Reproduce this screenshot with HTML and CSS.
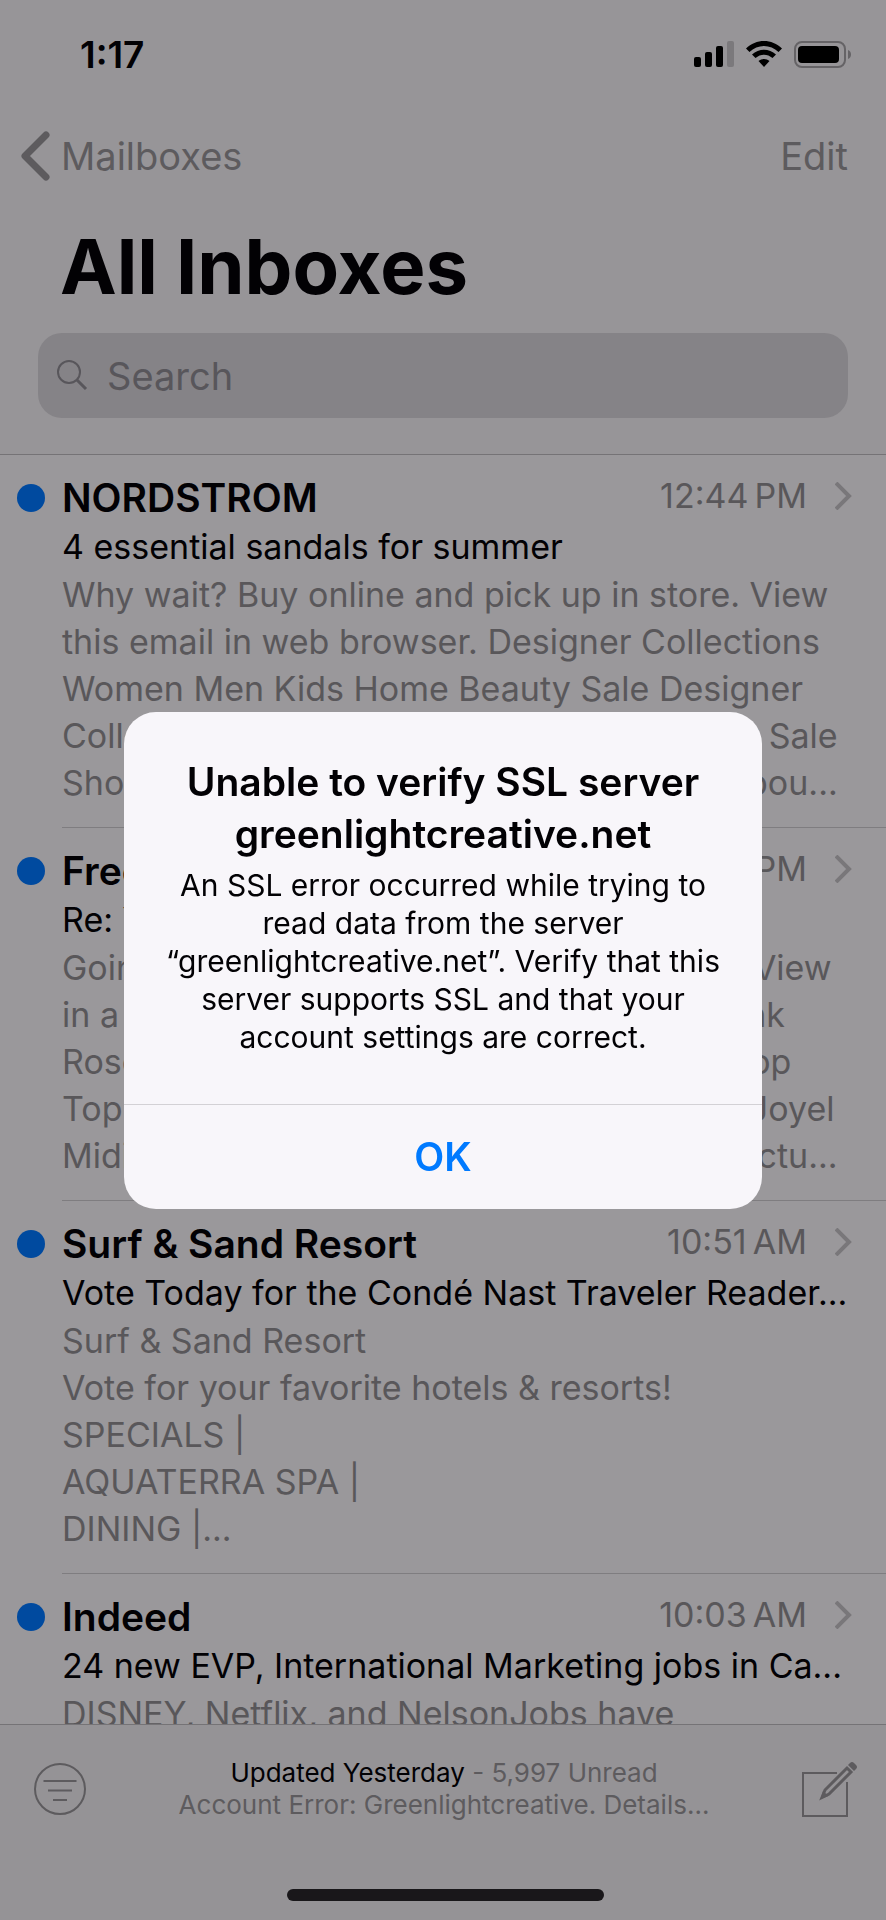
FILE: index.html
```html
<!DOCTYPE html>
<html lang="en">

<head>
    <meta charset="UTF-8">
    <meta name="viewport" content="width=device-width, initial-scale=1.0">
    <title>All Inboxes</title>
    <link rel="stylesheet" href="styles.css">
</head>

<body>
    <div class="app">
        <header class="header">
            <div class="status-bar">
                <span class="clock">1:17</span>
                <div class="status-icons">
                    <svg width="40" height="26" viewBox="0 0 40 26">
                        <rect x="0" y="16" width="7" height="10" rx="2"/>
                        <rect x="11" y="11" width="7" height="15" rx="2"/>
                        <rect x="22" y="5" width="7" height="21" rx="2"/>
                        <rect x="33" y="0" width="7" height="26" rx="2" fill="#7b797c"/>
                    </svg>
                    <svg width="36" height="26" viewBox="0 0 36 26">
                        <path d="M0 7.5C10-2.5 26-2.5 36 7.5L32.5 11C24.5 3 11.500 3 3.500 11Z"/>
                        <path d="M6 13.500C12.800 7 23.200 7 30 13.500L26.500 17C21.500 12.500 14.500 12.500 9.500 17Z"/>
                        <path d="M12.500 20C15.500 17.300 20.500 17.300 23.500 20L18 26Z"/>
                    </svg>
                    <svg width="58" height="27" viewBox="0 0 58 27">
                        <rect x="1" y="1" width="50" height="25" rx="7" fill="none" stroke="#656366" stroke-width="2"/>
                        <rect x="4" y="5" width="41" height="17" rx="4"/>
                        <path d="M54 9C58 10.500 58 16.500 54 18Z" fill="#656366"/>
                    </svg>
                </div>
            </div>

            <nav class="nav">
                <a class="back" href="#">
                    <svg width="30" height="50" viewBox="0 0 30 50" fill="none" stroke="currentColor" stroke-width="7" stroke-linecap="round" stroke-linejoin="round">
                        <path d="M26 4L5 25L26 46"/>
                    </svg>
                    Mailboxes
                </a>
                <button class="edit">Edit</button>
            </nav>

            <h1 class="title">All Inboxes</h1>

            <label class="search">
                <svg width="31" height="31" viewBox="0 0 31 31" fill="none" stroke="currentColor">
                    <circle cx="12" cy="12" r="11" stroke-width="2"/>
                    <path d="M20 20L29 29" stroke-width="3"/>
                </svg>
                <input type="text" placeholder="Search" aria-label="Search">
            </label>
        </header>

        <main class="list">
            <article class="mail">
                <div class="mail-head">
                    <span class="dot"></span>
                    <h2>NORDSTROM</h2>
                    <time>12:44&#8201;PM</time>
                    <svg class="arrow" width="17" height="28" viewBox="0 0 17 28"><path d="M1 1L14 14L1 27"/></svg>
                </div>
                <p class="subject">4 essential sandals for summer</p>
                <p class="preview">
                    <span>Why wait? Buy online and pick up in store. View</span>
                    <span>this email in web browser. Designer Collections</span>
                    <span>Women Men Kids Home Beauty Sale Designer</span>
                    <span>Collections Women Men Kids Home Beauty Sale</span>
                    <span>Shop online for new sandals. Learn more abou...</span>
                </p>
            </article>

            <article class="mail">
                <div class="mail-head">
                    <span class="dot"></span>
                    <h2>Free People</h2>
                    <time>12:05&#8201;PM</time>
                    <svg class="arrow" width="17" height="28" viewBox="0 0 17 28"><path d="M1 1L14 14L1 27"/></svg>
                </div>
                <p class="subject">Re: Your summer plans</p>
                <p class="preview">
                    <span>Going somewhere? Free shipping for trips. View</span>
                    <span>in a browser. New Dresses, Tops, Shoes Pink</span>
                    <span>Rose White Dress. Free People sandals. Shop</span>
                    <span>Top rated. New arrivals for this weekends. Joyel</span>
                    <span>Midi Dresses. Shop all of this new styles. Pictu...</span>
                </p>
            </article>

            <article class="mail">
                <div class="mail-head">
                    <span class="dot"></span>
                    <h2>Surf &amp; Sand Resort</h2>
                    <time>10:51&#8201;AM</time>
                    <svg class="arrow" width="17" height="28" viewBox="0 0 17 28"><path d="M1 1L14 14L1 27"/></svg>
                </div>
                <p class="subject">Vote Today for the Condé Nast Traveler Reader...</p>
                <p class="preview">
                    <span>Surf &amp; Sand Resort</span>
                    <span>Vote for your favorite hotels &amp; resorts!</span>
                    <span>SPECIALS |</span>
                    <span>AQUATERRA SPA |</span>
                    <span>DINING |...</span>
                </p>
            </article>

            <article class="mail">
                <div class="mail-head">
                    <span class="dot"></span>
                    <h2>Indeed</h2>
                    <time>10:03&#8201;AM</time>
                    <svg class="arrow" width="17" height="28" viewBox="0 0 17 28"><path d="M1 1L14 14L1 27"/></svg>
                </div>
                <p class="subject">24 new EVP, International Marketing jobs in Ca...</p>
                <p class="preview">
                    <span>DISNEY, Netflix, and NelsonJobs have</span>
                </p>
            </article>
        </main>

        <footer class="footer">
            <div class="toolbar">
                <button aria-label="Filter">
                    <svg width="52" height="52" viewBox="0 0 52 52" fill="none" stroke="currentColor" stroke-width="2">
                        <circle cx="26" cy="26" r="25"/>
                        <path d="M9.500 18H42.500M14 27.500H38M19 37H33"/>
                    </svg>
                </button>
                <div class="sync">
                    <p><b>Updated Yesterday</b> - 5,997 Unread</p>
                    <p>Account Error: Greenlightcreative. Details...</p>
                </div>
                <button aria-label="Compose">
                    <svg width="55" height="55" viewBox="0 0 55 55" fill="none" stroke="currentColor" stroke-width="2">
                        <path d="M35 11H1V54H45V20"/>
                        <path d="M20 35.500L23 28L45 6L49 10L27 32Z" stroke-width="3"/>
                        <path d="M18.500 37L21 29L26.500 34Z" fill="currentColor" stroke="none"/>
                        <path d="M46 3L48 1Q50 -1 52 1L54 3Q56 5 54 7L52 9Z" fill="currentColor" stroke="none"/>
                    </svg>
                </button>
            </div>
            <div class="home-bar"></div>
        </footer>
    </div>

    <div class="overlay">
        <div class="alert" role="alertdialog" aria-labelledby="alertTitle" aria-describedby="alertText">
            <div class="alert-body">
                <h2 id="alertTitle">Unable to verify SSL server greenlightcreative.net</h2>
                <p id="alertText">An SSL error occurred while trying to read data from the server “greenlightcreative.net”. Verify that this server supports SSL and that your account settings are correct.</p>
            </div>
            <button class="alert-ok">OK</button>
        </div>
    </div>
</body>

</html>
```
FILE: styles.css
```css
* {
    box-sizing: border-box;
}

body {
    margin: 0;
    font-family: Inter, "Liberation Sans", sans-serif;
    color: #020104;
    background-color: #9a989b;
}

h1, h2, p {
    margin: 0;
}

button {
    padding: 0;
    border: none;
    background: none;
    font-family: inherit;
    color: inherit;
    cursor: pointer;
}

svg {
    display: block;
    flex-shrink: 0;
}

.app {
    display: flex;
    flex-direction: column;
    height: 100vh;
    overflow: hidden;
}

/* Header */
.header {
    background-color: #979598;
    border-bottom: 1px solid #757376;
    padding-bottom: 36px;
}

.status-bar {
    display: flex;
    justify-content: space-between;
    align-items: center;
    height: 108px;
    padding: 0 34px 0 80px;
}

.clock {
    font-size: 37px;
    font-weight: 600;
}

.status-icons {
    display: flex;
    align-items: center;
    gap: 12px;
}

.nav {
    display: flex;
    justify-content: space-between;
    align-items: center;
    height: 96px;
    padding: 0 38px 0 20px;
    font-size: 38px;
    color: #5d5b5e;
}

.back {
    display: flex;
    align-items: center;
    gap: 11px;
    color: inherit;
    text-decoration: none;
}

.edit {
    font-size: 38px;
}

.title {
    padding: 0 60px;
    font-size: 76px;
    line-height: 124px;
    font-weight: 700;
}

.search {
    display: flex;
    align-items: center;
    gap: 19px;
    height: 85px;
    margin: 5px 38px 0;
    padding: 0 19px;
    border-radius: 24px;
    background-color: #858387;
    color: #58565b;
}

.search input {
    flex: 1;
    min-width: 0;
    padding: 0;
    border: none;
    outline: none;
    background: none;
    font-family: inherit;
    font-size: 38px;
    color: inherit;
}

.search input::placeholder {
    color: #58565b;
    opacity: 1;
}

/* Mail list */
.list {
    flex: 1;
    min-height: 0;
    overflow: hidden;
}

.mail {
    margin-left: 62px;
    padding: 18px 34px 21px 0;
    border-bottom: 1px solid #7f7d80;
}

.mail-head {
    display: flex;
    align-items: center;
    height: 50px;
}

.dot {
    width: 28px;
    height: 28px;
    margin-left: -45px;
    margin-right: 17px;
    border-radius: 50%;
    background-color: #004a9f;
}

.mail h2 {
    flex: 1;
    font-size: 39px;
    line-height: 50px;
    font-weight: 600;
}

.mail time {
    font-size: 34px;
    line-height: 46px;
    padding-bottom: 4px;
    color: #59575a;
}

.arrow {
    margin: 0 0 4px 28px;
    fill: none;
    stroke: #79777a;
    stroke-width: 4;
}

.subject {
    font-size: 34px;
    line-height: 48px;
    white-space: nowrap;
}

.preview {
    font-size: 34px;
    line-height: 47px;
    color: #59575a;
}

.preview span {
    display: block;
    white-space: nowrap;
}

/* Footer */
.footer {
    height: 196px;
    flex-shrink: 0;
    display: flex;
    flex-direction: column;
    justify-content: space-between;
    align-items: center;
    padding: 32px 29px 19px 34px;
    border-top: 1px solid #757376;
    background-color: #959396;
}

.toolbar {
    width: 100%;
    display: flex;
    justify-content: space-between;
    align-items: center;
    color: #5d5b5e;
}

.sync {
    font-size: 26px;
    line-height: 32px;
    text-align: center;
}

.sync b {
    font-weight: 400;
    color: #020104;
}

.home-bar {
    width: 317px;
    height: 12px;
    border-radius: 6px;
    background-color: #19171a;
}

/* Alert */
.overlay {
    position: fixed;
    inset: 0;
    display: flex;
    justify-content: center;
    align-items: center;
}

.alert {
    width: 72%;
    border-radius: 32px;
    background-color: #f8f6fa;
    color: #020104;
    text-align: center;
    overflow: hidden;
}

.alert-body {
    padding: 44px 32px 48px;
}

.alert h2 {
    font-size: 39px;
    line-height: 52px;
    font-weight: 600;
}

.alert p {
    margin-top: 6px;
    font-size: 30px;
    line-height: 38px;
}

.alert-ok {
    width: 100%;
    height: 105px;
    border-top: 1px solid #d3d1d5;
    font-size: 39px;
    font-weight: 600;
    color: #007aff;
}
```
